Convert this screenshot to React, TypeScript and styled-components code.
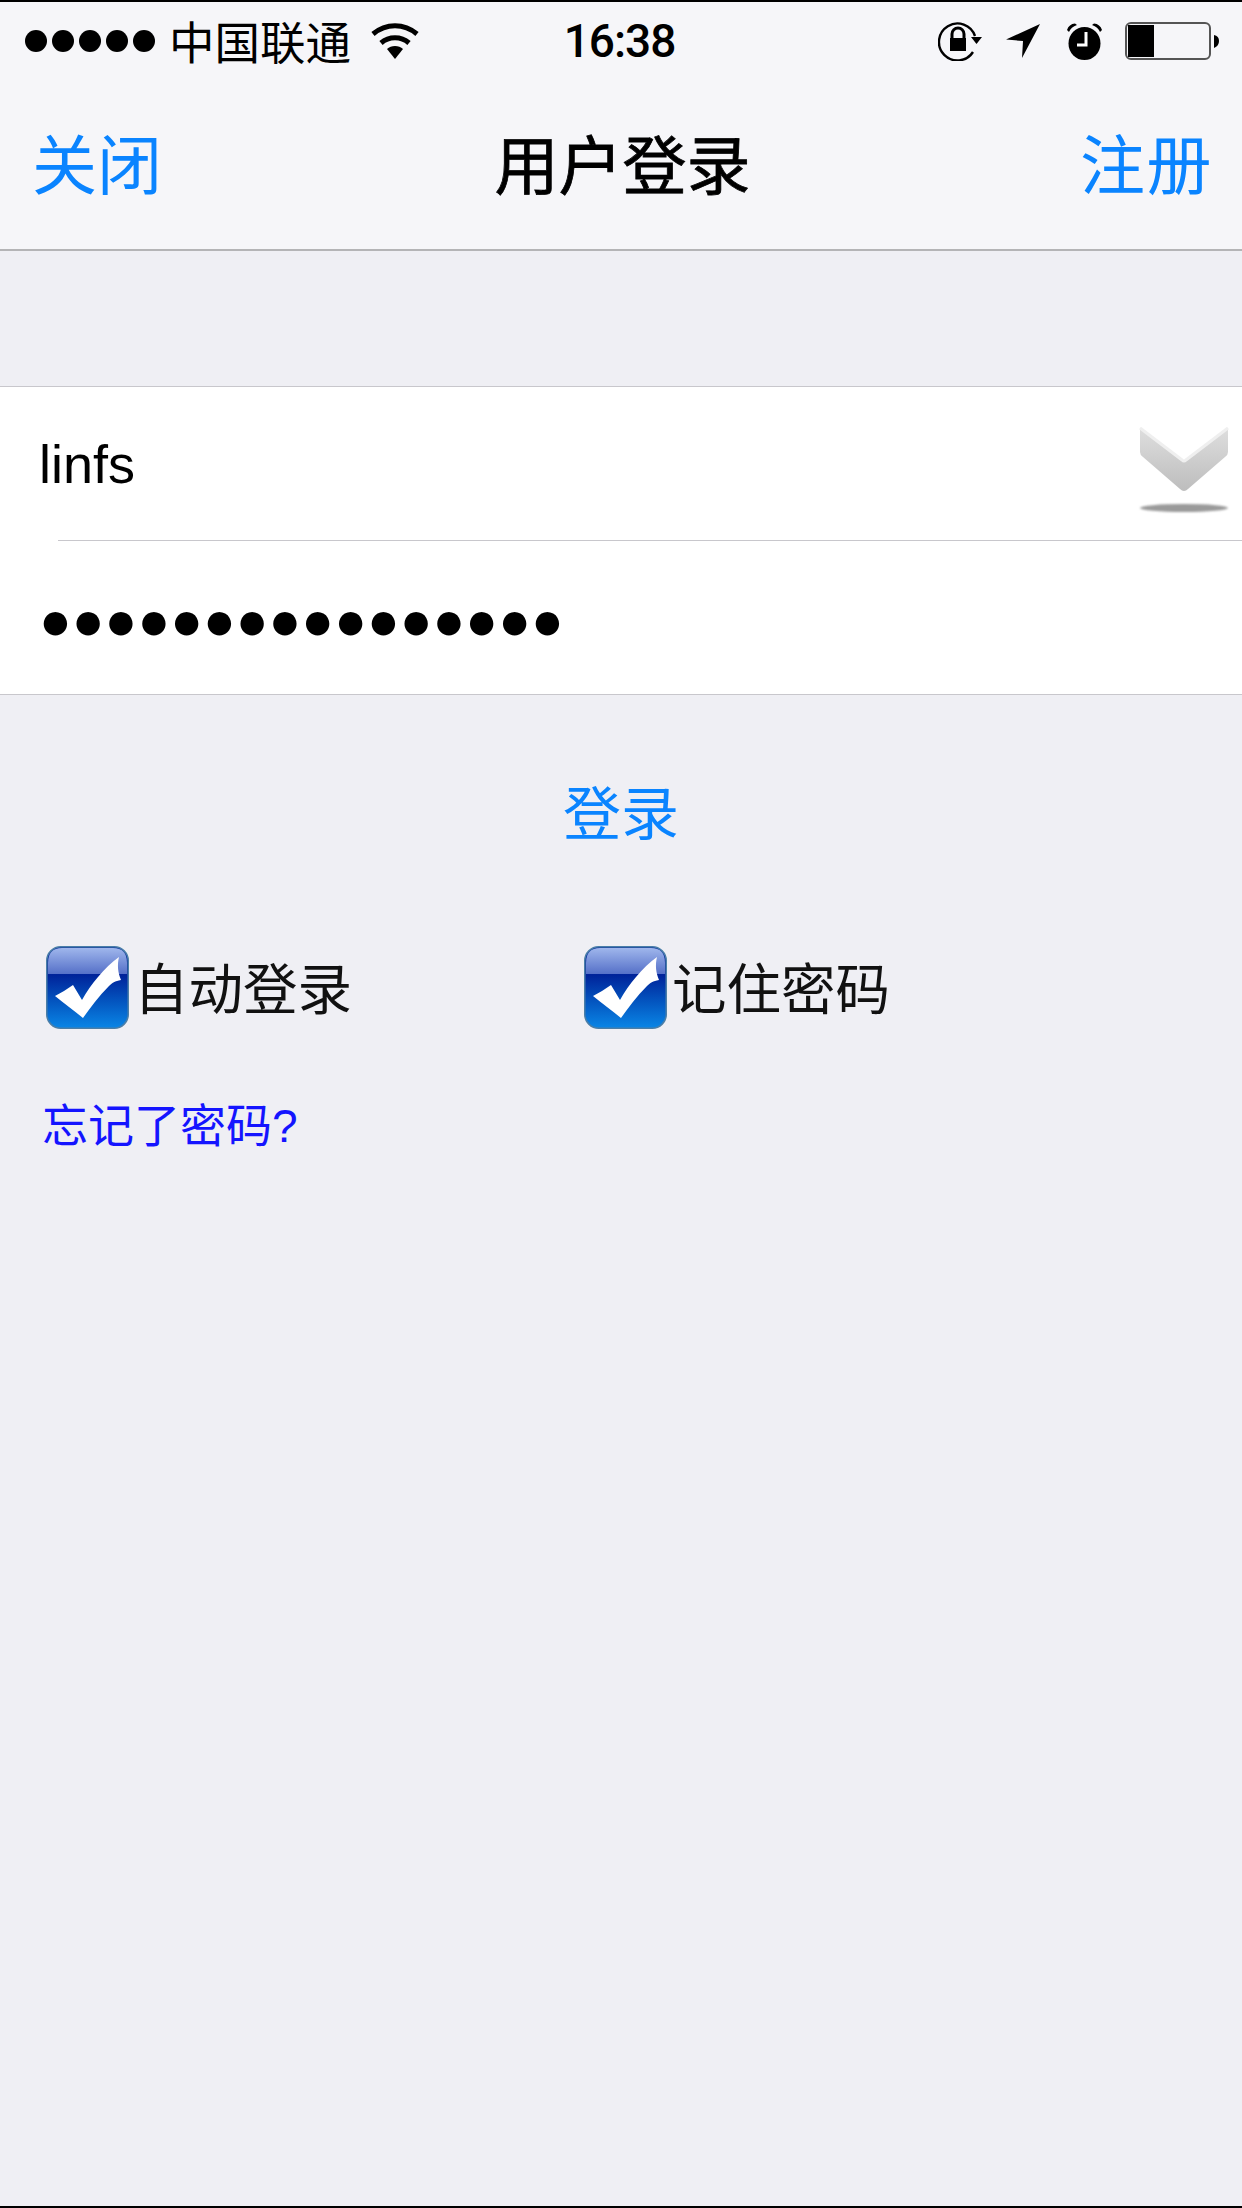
import React from "react";
import styled, { createGlobalStyle } from "styled-components";

const Global = createGlobalStyle`
  html, body { margin: 0; padding: 0; background: #efeff4; }
  * { box-sizing: border-box; }
`;

const CJK = `"Noto Sans CJK SC", "Liberation Sans", sans-serif`;
const LATIN = `"Liberation Sans", "Noto Sans CJK SC", sans-serif`;

const Screen = styled.div`
  width: 1242px;
  height: 2208px;
  background: #efeff4;
  border-top: 2px solid #000;
  border-bottom: 2px solid #000;
  display: flex;
  flex-direction: column;
  overflow: hidden;
  font-family: ${CJK};
  color: #000;
`;

const Header = styled.header`
  height: 249px;
  background: #f6f6f9;
  border-bottom: 2px solid #b4b4b6;
  flex: none;
`;

const StatusBar = styled.div`
  height: 78px;
  display: grid;
  grid-template-columns: 1fr auto 1fr;
  align-items: center;
  padding: 0 23px 0 25px;
`;

const StatusLeft = styled.div`
  display: flex;
  align-items: center;
`;

const StatusRight = styled.div`
  display: flex;
  align-items: center;
  justify-content: flex-end;
`;

const SignalDots = styled.div`
  display: flex;
  gap: 5px;
  margin-right: 14px;
`;

const SignalDot = styled.span`
  width: 22px;
  height: 22px;
  border-radius: 50%;
  background: #000;
`;

const Carrier = styled.span`
  font-size: 45.5px;
  line-height: 60px;
  font-weight: 400;
  padding-bottom: 2px;
`;

const Time = styled.span`
  font-family: Roboto, "Liberation Sans", sans-serif;
  font-size: 46px;
  font-weight: 500;
  line-height: 60px;
  letter-spacing: -1px;
  margin-left: -5px;
`;

const Glyph = styled.svg<{ $gap?: number }>`
  display: block;
  flex: none;
  margin-left: ${(p) => p.$gap ?? 0}px;
`;

const NavBar = styled.nav`
  height: 161px;
  display: grid;
  grid-template-columns: 1fr auto 1fr;
  align-items: center;
  padding: 0 29px 0 32px;
  font-size: 65px;
  line-height: 80px;
`;

const NavAction = styled.a<{ $end?: boolean }>`
  color: #0a84ff;
  font-weight: 400;
  text-align: ${(p) => (p.$end ? "right" : "left")};
  letter-spacing: ${(p) => (p.$end ? "1.5px" : "0")};
`;

const NavTitle = styled.h1`
  margin: 0;
  font-size: 64px;
  font-weight: 400;
  -webkit-text-stroke: 0.8px #000;
`;

const Form = styled.section`
  margin-top: 135px;
  background: #fff;
  border-top: 1px solid #c8c7cc;
  border-bottom: 1px solid #c8c7cc;
  flex: none;
`;

const Row = styled.div`
  height: 153px;
  display: flex;
  align-items: center;
  justify-content: space-between;
  padding-left: 39px;
  font-family: ${LATIN};
`;

const Separator = styled.div`
  height: 1px;
  margin-left: 58px;
  background: #c8c7cc;
`;

const Username = styled.span`
  font-size: 54px;
  line-height: 60px;
`;

const Password = styled.span`
  font-size: 54.3px;
  line-height: 60px;
  padding-top: 6px;
`;

const Chevron = styled.svg`
  display: block;
  margin: 14px 12px 0 0;
`;

const LoginButton = styled.a`
  margin-top: 77px;
  text-align: center;
  font-size: 58px;
  line-height: 76px;
  color: #0a84ff;
  font-weight: 400;
`;

const Options = styled.div`
  margin-top: 97px;
  padding-left: 46px;
  display: flex;
`;

const Option = styled.label`
  width: 538px;
  display: flex;
  align-items: center;
  gap: 5px;
  font-size: 54.5px;
  line-height: 81px;
  font-weight: 400;
  color: #111;
`;

const OptionText = styled.span`
  padding-bottom: 3px;
`;

const ForgotLink = styled.a`
  margin-top: 67px;
  padding-left: 42px;
  font-family: ${LATIN};
  font-size: 46px;
  line-height: 60px;
  color: #1414ff;
`;

const CheckBox = ({ id }: { id: string }) => (
  <Glyph width="83" height="83" viewBox="0 0 83 83">
    <defs>
      <linearGradient id={`${id}-base`} x1="0" y1="0" x2="0" y2="1">
        <stop offset="0" stopColor="#0a2f9c" />
        <stop offset="0.35" stopColor="#00239a" />
        <stop offset="0.65" stopColor="#0352bd" />
        <stop offset="1" stopColor="#0a86e6" />
      </linearGradient>
      <linearGradient id={`${id}-gloss`} x1="0" y1="0" x2="0" y2="1">
        <stop offset="0" stopColor="#9fb6ec" />
        <stop offset="1" stopColor="#5570c8" />
      </linearGradient>
    </defs>
    <rect x="0.75" y="0.75" width="81.5" height="81.5" rx="14" fill={`url(#${id}-base)`} stroke="#4a7ea8" strokeWidth="1.5" />
    <path d="M2 17 Q2 2 16 2 H67 Q81 2 81 17 V28 H2 Z" fill={`url(#${id}-gloss)`} />
    <path
      d="M73 11 C71 19 72 27 75 34 C69 35 66 37 63 40 C53 50 44 62 37 72 C28 65 18 57 9 50 C15 47 21 43 27 39 C30 44 33 49 36 54 C45 38 58 22 73 11 Z"
      fill="#fff"
    />
  </Glyph>
);

export default function App() {
  return (
    <>
      <Global />
      <Screen>
        <Header>
          <StatusBar>
            <StatusLeft>
              <SignalDots>
                <SignalDot />
                <SignalDot />
                <SignalDot />
                <SignalDot />
                <SignalDot />
              </SignalDots>
              <Carrier>中国联通</Carrier>
              <Glyph $gap={20} width="48" height="36" viewBox="0 0 48 36">
                <path d="M2 11 C15 0 33 0 46 11" fill="none" stroke="#000" strokeWidth="5" strokeLinecap="butt" />
                <path d="M10 20 C18 13 30 13 38 20" fill="none" stroke="#000" strokeWidth="5" />
                <path d="M16 26 C20 22 28 22 32 26 L24 36 Z" fill="#000" />
              </Glyph>
            </StatusLeft>
            <Time>16:38</Time>
            <StatusRight>
              <Glyph width="44" height="40" viewBox="0 0 44 40">
                <path d="M37 15 A18.5 18.5 0 1 0 35 31" fill="none" stroke="#000" strokeWidth="2.4" />
                <path d="M33 16 H44 L38.5 23 Z" fill="#000" />
                <path d="M14 16 V12 A6 6 0 0 1 26 12 V16" transform="translate(0 1)" fill="none" stroke="#000" strokeWidth="3" />
                <rect x="12" y="17" width="16" height="13" fill="#000" />
              </Glyph>
              <Glyph $gap={24} width="34" height="34" viewBox="0 0 34 34">
                <path d="M34 0 L0 15.5 L17 17 L16 34 Z" fill="#000" />
              </Glyph>
              <Glyph $gap={26} width="37" height="37" viewBox="0 0 37 37">
                <ellipse cx="18.5" cy="20.5" rx="16" ry="16.5" fill="#000" />
                <path d="M1 7 Q3 1 9 0.5 L11 2 Q5 4 3 9 Z" fill="#000" />
                <path d="M36 7 Q34 1 28 0.5 L26 2 Q32 4 34 9 Z" fill="#000" />
                <path d="M20 9 V22 H11" fill="none" stroke="#fff" strokeWidth="3" />
              </Glyph>
              <Glyph $gap={22} width="94" height="38" viewBox="0 0 94 38">
                <rect x="1" y="1" width="84" height="36" rx="5" fill="none" stroke="#555" strokeWidth="2" />
                <rect x="3" y="3" width="26" height="32" fill="#000" />
                <path d="M89 13 Q94 14 94 19 Q94 24 89 26 Z" fill="#000" />
              </Glyph>
            </StatusRight>
          </StatusBar>
          <NavBar>
            <NavAction>关闭</NavAction>
            <NavTitle>用户登录</NavTitle>
            <NavAction $end>注册</NavAction>
          </NavBar>
        </Header>
        <Form>
          <Row>
            <Username>linfs</Username>
            <Chevron width="92" height="90" viewBox="0 0 92 90">
              <defs>
                <linearGradient id="chevron-fill" x1="0" y1="0" x2="0" y2="1">
                  <stop offset="0" stopColor="#dedede" />
                  <stop offset="1" stopColor="#bdbdbd" />
                </linearGradient>
                <filter id="chevron-blur" x="-10%" y="-60%" width="120%" height="220%">
                  <feGaussianBlur stdDeviation="1" />
                </filter>
              </defs>
              <path
                d="M2 2 L44 34 Q46 36 48 34 L90 2 V26 Q90 29 87 31 L50 63 Q46 67 42 63 L5 31 Q2 29 2 26 Z"
                fill="url(#chevron-fill)"
              />
              <path d="M2 2 L44 34 Q46 36 48 34 L90 2" fill="none" stroke="#efefef" strokeWidth="3" />
              <ellipse cx="46" cy="82" rx="44" ry="4" fill="#9a9a9a" filter="url(#chevron-blur)" />
            </Chevron>
          </Row>
          <Separator />
          <Row>
            <Password>●●●●●●●●●●●●●●●●</Password>
          </Row>
        </Form>
        <LoginButton>登录</LoginButton>
        <Options>
          <Option>
            <CheckBox id="auto" />
            <OptionText>自动登录</OptionText>
          </Option>
          <Option>
            <CheckBox id="remember" />
            <OptionText>记住密码</OptionText>
          </Option>
        </Options>
        <ForgotLink>忘记了密码?</ForgotLink>
      </Screen>
    </>
  );
}
